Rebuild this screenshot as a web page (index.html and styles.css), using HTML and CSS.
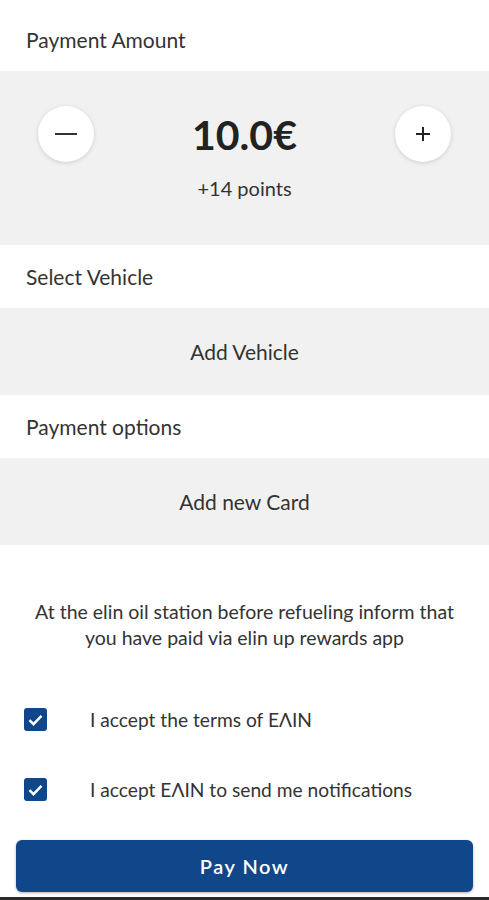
FILE: index.html
```html
<!DOCTYPE html>
<html lang="en">
<head>
    <meta charset="UTF-8">
    <meta name="viewport" content="width=device-width, initial-scale=1.0">
    <title>Payment</title>
    <link rel="stylesheet" href="styles.css">
</head>
<body>
    <div class="screen">
        <div class="section-title">Payment Amount</div>
        <div class="amount-panel">
            <div class="amount-row">
                <button class="round-btn" type="button" aria-label="Decrease">
                    <span class="minus"></span>
                </button>
                <div class="amount">10.0€</div>
                <button class="round-btn" type="button" aria-label="Increase">
                    <svg width="18" height="18" viewBox="0 0 18 18">
                        <path d="M9 2v14M2 9h14" stroke="#222" stroke-width="2" fill="none"/>
                    </svg>
                </button>
            </div>
            <div class="points">+14 points</div>
        </div>

        <div class="section-title">Select Vehicle</div>
        <div class="add-panel">Add Vehicle</div>

        <div class="section-title">Payment options</div>
        <div class="add-panel">Add new Card</div>

        <p class="info">At the elin oil station before refueling inform that<br>you have paid via elin up rewards app</p>

        <div class="checks">
            <label class="check-row">
                <span class="box">
                    <svg width="15" height="12" viewBox="0 0 15 12">
                        <path d="M1.5 6.2l4 4L13.5 1.8" stroke="#fff" stroke-width="2.4" fill="none"/>
                    </svg>
                </span>
                <span>I accept the terms of EΛIN</span>
            </label>
            <label class="check-row">
                <span class="box">
                    <svg width="15" height="12" viewBox="0 0 15 12">
                        <path d="M1.5 6.2l4 4L13.5 1.8" stroke="#fff" stroke-width="2.4" fill="none"/>
                    </svg>
                </span>
                <span>I accept EΛIN to send me notifications</span>
            </label>
        </div>

        <div class="pay-wrap">
            <button class="pay-btn" type="button">Pay Now</button>
        </div>
    </div>
</body>
</html>
```

FILE: styles.css
```css
body {
    margin: 0;
    font-family: Lato, 'Open Sans', Arial, sans-serif;
    color: #333;
    background: #fff;
}

.screen {
    width: 489px;
    height: 900px;
    display: flex;
    flex-direction: column;
    border-bottom: 3px solid #2b2b2b;
    box-sizing: border-box;
}

.section-title {
    height: 63px;
    display: flex;
    align-items: center;
    padding-left: 26px;
    font-size: 21px;
    color: #333;
}

.section-title:first-child {
    height: 71px;
    padding-top: 8px;
    box-sizing: border-box;
}

.amount-panel {
    background: #f1f1f1;
    height: 174px;
    display: flex;
    flex-direction: column;
    align-items: center;
}

.amount-row {
    width: 100%;
    display: flex;
    align-items: center;
    justify-content: space-between;
    padding: 35px 38px 0 38px;
    box-sizing: border-box;
}

.round-btn {
    width: 56px;
    height: 56px;
    border-radius: 50%;
    border: none;
    background: #fff;
    box-shadow: 0 1px 4px rgba(0, 0, 0, 0.15);
    display: flex;
    align-items: center;
    justify-content: center;
    padding: 0;
}

.minus {
    width: 22px;
    height: 2px;
    background: #333;
}

.amount {
    font-size: 41px;
    font-weight: bold;
    color: #222;
}

.points {
    margin-top: 14px;
    font-size: 20px;
    color: #333;
}

.add-panel {
    background: #f1f1f1;
    height: 87px;
    display: flex;
    align-items: center;
    justify-content: center;
    font-size: 21px;
    color: #333;
}

.info {
    margin: 54px 10px 0;
    text-align: center;
    font-size: 19.5px;
    line-height: 26px;
    color: #333;
}

.checks {
    margin-top: 57px;
    display: flex;
    flex-direction: column;
    gap: 47px;
}

.check-row {
    height: 23px;
    display: flex;
    align-items: center;
    padding-left: 24px;
    font-size: 19.2px;
    color: #333;
}

.box {
    width: 23px;
    height: 23px;
    border-radius: 3px;
    background: #10478a;
    display: flex;
    align-items: center;
    justify-content: center;
    margin-right: 43px;
}

.pay-wrap {
    margin-top: auto;
    padding: 0 16px 5px;
}

.pay-btn {
    width: 100%;
    height: 52px;
    border: none;
    border-radius: 6px;
    background: #10478a;
    color: #fff;
    font-family: Lato, 'Open Sans', Arial, sans-serif;
    font-size: 20px;
    font-weight: 600;
    letter-spacing: 1.5px;
    box-shadow: 0 1px 3px rgba(0, 0, 0, 0.3);
}
```
